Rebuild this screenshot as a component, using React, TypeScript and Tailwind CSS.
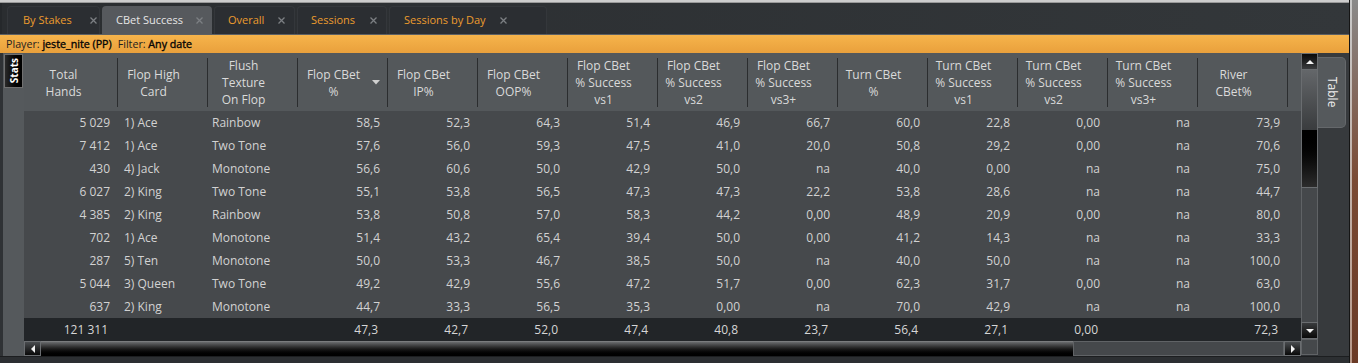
import React from "react";

type Col = { label: string[]; w: string; align: "left" | "right"; pl?: string; sort?: boolean; first?: boolean };

const cols: Col[] = [
  { label: ["Total", "Hands"], w: "w-[94px]", align: "right", first: true },
  { label: ["Flop High", "Card"], w: "w-[90px]", align: "left", pl: "pl-[6px]" },
  { label: ["Flush", "Texture", "On Flop"], w: "w-[90px]", align: "left", pl: "pl-[4px]" },
  { label: ["Flop CBet", "%"], w: "w-[90px]", align: "right", sort: true },
  { label: ["Flop CBet", "IP%"], w: "w-[90px]", align: "right" },
  { label: ["Flop CBet", "OOP%"], w: "w-[90px]", align: "right" },
  { label: ["Flop CBet", "% Success", "vs1"], w: "w-[90px]", align: "right" },
  { label: ["Flop CBet", "% Success", "vs2"], w: "w-[90px]", align: "right" },
  { label: ["Flop CBet", "% Success", "vs3+"], w: "w-[90px]", align: "right" },
  { label: ["Turn CBet", "%"], w: "w-[90px]", align: "right" },
  { label: ["Turn CBet", "% Success", "vs1"], w: "w-[90px]", align: "right" },
  { label: ["Turn CBet", "% Success", "vs2"], w: "w-[90px]", align: "right" },
  { label: ["Turn CBet", "% Success", "vs3+"], w: "w-[90px]", align: "right" },
  { label: ["River", "CBet%"], w: "w-[90px]", align: "right" },
];

const rows: string[][] = [
  ["5 029", "1) Ace", "Rainbow", "58,5", "52,3", "64,3", "51,4", "46,9", "66,7", "60,0", "22,8", "0,00", "na", "73,9"],
  ["7 412", "1) Ace", "Two Tone", "57,6", "56,0", "59,3", "47,5", "41,0", "20,0", "50,8", "29,2", "0,00", "na", "70,6"],
  ["430", "4) Jack", "Monotone", "56,6", "60,6", "50,0", "42,9", "50,0", "na", "40,0", "0,00", "na", "na", "75,0"],
  ["6 027", "2) King", "Two Tone", "55,1", "53,8", "56,5", "47,3", "47,3", "22,2", "53,8", "28,6", "na", "na", "44,7"],
  ["4 385", "2) King", "Rainbow", "53,8", "50,8", "57,0", "58,3", "44,2", "0,00", "48,9", "20,9", "0,00", "na", "80,0"],
  ["702", "1) Ace", "Monotone", "51,4", "43,2", "65,4", "39,4", "50,0", "0,00", "41,2", "14,3", "na", "na", "33,3"],
  ["287", "5) Ten", "Monotone", "50,0", "53,3", "46,7", "38,5", "50,0", "na", "40,0", "50,0", "na", "na", "100,0"],
  ["5 044", "3) Queen", "Two Tone", "49,2", "42,9", "55,6", "47,2", "51,7", "0,00", "62,3", "31,7", "0,00", "na", "63,0"],
  ["637", "2) King", "Monotone", "44,7", "33,3", "56,5", "35,3", "0,00", "na", "70,0", "42,9", "na", "na", "100,0"],
];

const totals = ["121 311", "", "", "47,3", "42,7", "52,0", "47,4", "40,8", "23,7", "56,4", "27,1", "0,00", "", "72,3"];

const tabs = [
  { name: "By Stakes", w: "w-[93px]", pl: "pl-[15px]", gap: "ml-[18px]", active: false },
  { name: "CBet Success", w: "w-[110px]", pl: "pl-[14px]", gap: "ml-[13px]", active: true },
  { name: "Overall", w: "w-[81px]", pl: "pl-[13px]", gap: "ml-[14px]", active: false },
  { name: "Sessions", w: "w-[90px]", pl: "pl-[13px]", gap: "ml-[15px]", active: false },
  { name: "Sessions by Day", w: "w-[158px]", pl: "pl-[14px]", gap: "ml-[14px]", active: false },
];

const Close = () => (
  <svg width="7" height="7" viewBox="0 0 7 7" className="shrink-0">
    <path d="M0.5 0.5 L6.5 6.5 M6.5 0.5 L0.5 6.5" stroke="#7c7f83" strokeWidth="1.3" />
  </svg>
);

const Tri = ({ dir }: { dir: "up" | "down" | "left" | "right" }) => {
  const d =
    dir === "up" ? "M1 6 L5 2 L9 6 Z" : dir === "down" ? "M1 2 L9 2 L5 6 Z" : dir === "left" ? "M6 1 L6 9 L2 5 Z" : "M2 1 L2 9 L6 5 Z";
  const w = dir === "up" || dir === "down" ? 10 : 8;
  const h = dir === "up" || dir === "down" ? 8 : 10;
  return (
    <svg width={w} height={h} viewBox={`0 0 ${w} ${h}`}>
      <path d={d} fill="#f2f2f2" />
    </svg>
  );
};

export default function App() {
  return (
    <div
      className="w-[1358px] h-[363px] flex overflow-hidden bg-[#2e3135] text-[#d4d4d4]"
      style={{ fontFamily: '"Open Sans", "Noto Sans", sans-serif' }}
    >
      <div className="w-[1349px] flex flex-col">
        {/* top strip */}
        <div className="h-[3px] bg-[#cdcdcd] border-b border-[#9a9a9a]" />
        {/* tab bar */}
        <div className="h-[31px] flex items-end pl-[5px] gap-[2px] bg-gradient-to-r from-[#2a2d30] to-[#33373a] border-l-[2px] border-[#25282b]">
          {tabs.map((t) => (
            <div
              key={t.name}
              className={`${t.w} h-[28px] flex items-center rounded-t-[4px] text-[11px] ${t.pl} ${
                t.active ? "bg-[#56595d] text-[#e6e6e6]" : "bg-[#2b2e32] text-[#ec9c2e] border-t border-x border-[#34373b]"
              }`}
            >
              <span className="whitespace-nowrap">{t.name}</span>
              <span className={t.gap}>
                <Close />
              </span>
            </div>
          ))}
        </div>
        {/* orange filter bar */}
        <div className="h-[19px] flex items-center pl-[6px] text-[10.7px] text-[#1e1e1e] bg-gradient-to-b from-[#f6b44b] to-[#e9a03c] border-t border-[#5d6063] whitespace-nowrap">
          <span>Player:&nbsp;</span>
          <span className="text-[#050505] [-webkit-text-stroke:0.35px_#050505]">jeste_nite (PP)</span>
          <span className="ml-[6px]">Filter:&nbsp;</span>
          <span className="text-[#050505] [-webkit-text-stroke:0.35px_#050505]">Any date</span>
        </div>
        {/* content */}
        <div className="h-[303px] flex">
          {/* left strip */}
          <div className="w-[24px] bg-[#55595c] border-l-[3px] border-[#2f3235] pt-[1px] pl-[1px]">
            <div className="w-[19px] h-[34px] bg-gradient-to-r from-[#2a2a2a] to-[#000000] border border-[#707070] flex items-center justify-center">
              <span className="[writing-mode:vertical-rl] rotate-180 text-[10px] font-bold text-white leading-none">Stats</span>
            </div>
          </div>
          {/* grid */}
          <div className="w-[1277px] flex flex-col">
            {/* header */}
            <div className="h-[58px] flex pt-[5px] pb-[4px] bg-[#54585b] text-[12px] leading-[17px] text-[#dadada]">
              {cols.map((c, i) => (
                <div key={i} className={`${c.w} shrink-0 flex border-r border-[#2b2d2f] ${c.first ? "pl-[4px]" : ""}`}>
                  <div className="flex-1 flex flex-col items-center justify-center text-center whitespace-nowrap">
                    {c.label.map((l, j) => (
                      <span key={j}>{l}</span>
                    ))}
                  </div>
                  <div className="w-[18px] flex items-center">
                    {c.sort && (
                      <svg width="8" height="5" viewBox="0 0 8 5" className="ml-[3px] mb-[1px]">
                        <path d="M0 0 L8 0 L4 4.5 Z" fill="#d0d0d0" />
                      </svg>
                    )}
                  </div>
                </div>
              ))}
              <div className="flex-1" />
            </div>
            {/* body rows */}
            <div className="bg-[#46494c] text-[12px] text-[#d2d2d2]">
              {rows.map((r, ri) => (
                <div key={ri} className="h-[23px] flex items-center">
                  {cols.map((c, ci) => (
                    <div
                      key={ci}
                      className={`${c.w} shrink-0 whitespace-nowrap ${c.align === "right" ? "text-right pr-[8px]" : `text-left ${c.pl}`}`}
                    >
                      {r[ci]}
                    </div>
                  ))}
                </div>
              ))}
            </div>
            {/* totals */}
            <div className="h-[23px] flex items-center bg-[#222528] text-[12px] text-[#d6d6d6]">
              {cols.map((c, ci) => (
                <div key={ci} className={`${c.w} shrink-0 whitespace-nowrap text-right pr-[10px]`}>
                  {totals[ci]}
                </div>
              ))}
            </div>
            {/* horizontal scrollbar */}
            <div className="h-[15px] flex">
              <div className="w-[17px] flex items-center justify-center bg-gradient-to-b from-[#4a4d50] to-[#0a0a0a] border border-[#6a6d70]">
                <Tri dir="left" />
              </div>
              <div className="w-[1032px] bg-gradient-to-b from-[#6a6c6e] via-[#1a1a1a] to-[#000000] border-t border-[#7a7c7e]" />
              <div className="w-[211px] bg-[#45484b] border border-[#606366]" />
              <div className="w-[17px] flex items-center justify-center bg-gradient-to-b from-[#4a4d50] to-[#0a0a0a] border border-[#6a6d70]">
                <Tri dir="right" />
              </div>
            </div>
          </div>
          {/* vertical scrollbar */}
          <div className="w-[17px] flex flex-col">
            <div className="h-[17px] flex items-center justify-center bg-gradient-to-b from-[#0a0a0a] to-[#3a3c3e] border border-[#6a6d70]">
              <Tri dir="up" />
            </div>
            <div className="h-[60px] bg-gradient-to-b from-[#64676a] to-[#3a3c3e] border-x border-[#6a6d70]" />
            <div className="h-[58px] bg-gradient-to-b from-[#000000] to-[#2c2c2c] border-x border-b border-[#6a6d70]" />
            <div className="h-[134px] bg-[#45484b] border-x border-[#606366]" />
            <div className="h-[17px] flex items-center justify-center bg-gradient-to-b from-[#3a3c3e] to-[#0a0a0a] border border-[#6a6d70]">
              <Tri dir="down" />
            </div>
            <div className="h-[16px] bg-[#45484b] border border-[#606366]" />
          </div>
          {/* right panel */}
          <div className="w-[31px] bg-[#373a3d] pt-[4px]">
            <div className="w-[28px] h-[71px] bg-[#55595c] rounded-r-[5px] border border-l-0 border-[#65686b] flex items-center justify-center">
              <span className="[writing-mode:vertical-rl] text-[12px] text-[#eeeeee] leading-none">Table</span>
            </div>
          </div>
        </div>
        {/* bottom strip */}
        <div className="h-[7px] bg-[#2c2f32] border-t border-[#1c1e20]" />
      </div>
      {/* right frame */}
      <div className="w-[9px] flex">
        <div className="w-[1px] bg-[#151515]" />
        <div className="w-[2px] bg-gradient-to-b from-[#c8c8c8] to-[#b89888]" />
        <div className="w-[6px] bg-gradient-to-b from-[#8a8a8a] via-[#7a4a34] to-[#6a3a26]" />
      </div>
    </div>
  );
}
